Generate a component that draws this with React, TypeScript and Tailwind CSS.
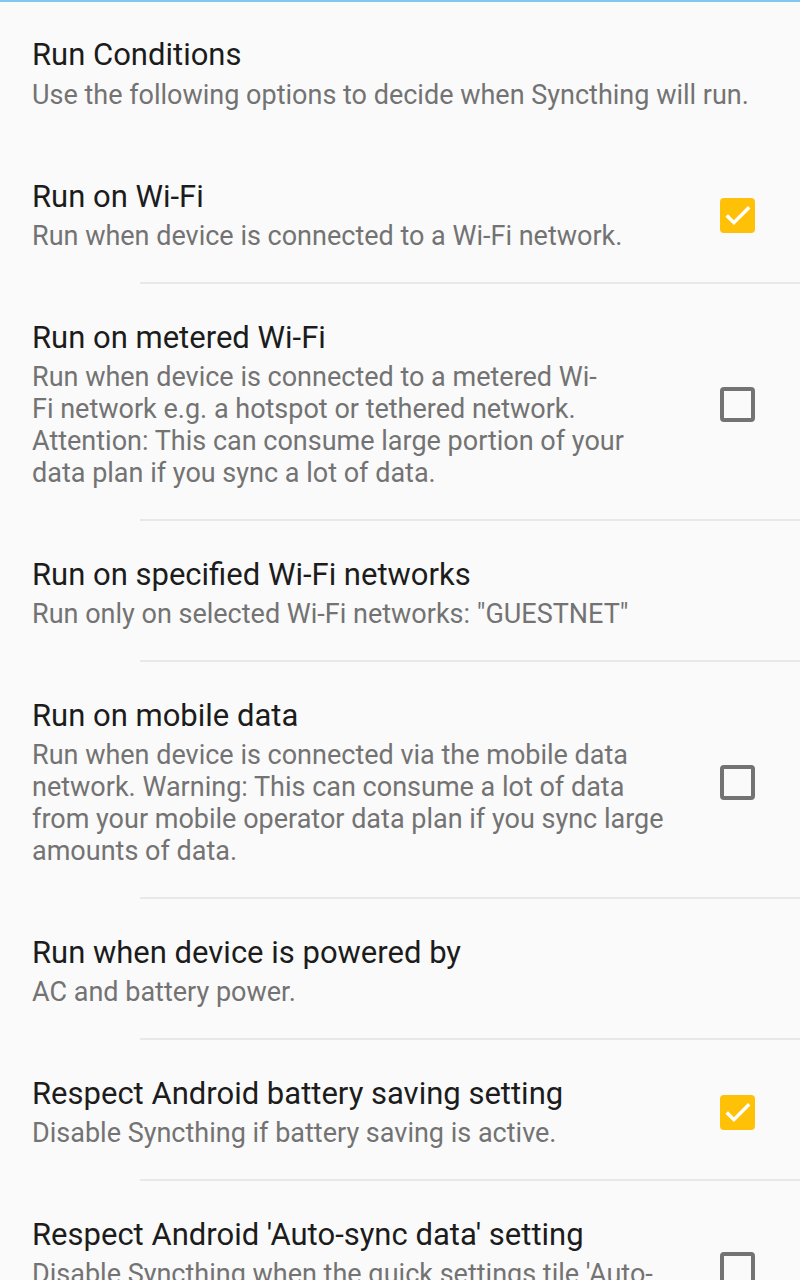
import React from 'react';

type Pref = {
  title: string;
  lines: string[];
  check?: 'on' | 'off';
};

const prefs: Pref[] = [
  { title: 'Run on Wi-Fi', lines: ['Run when device is connected to a Wi-Fi network.'], check: 'on' },
  {
    title: 'Run on metered Wi-Fi',
    lines: [
      'Run when device is connected to a metered Wi-',
      'Fi network e.g. a hotspot or tethered network.',
      'Attention: This can consume large portion of your',
      'data plan if you sync a lot of data.',
    ],
    check: 'off',
  },
  { title: 'Run on specified Wi-Fi networks', lines: ['Run only on selected Wi-Fi networks: "GUESTNET"'] },
  {
    title: 'Run on mobile data',
    lines: [
      'Run when device is connected via the mobile data',
      'network. Warning: This can consume a lot of data',
      'from your mobile operator data plan if you sync large',
      'amounts of data.',
    ],
    check: 'off',
  },
  { title: 'Run when device is powered by', lines: ['AC and battery power.'] },
  { title: 'Respect Android battery saving setting', lines: ['Disable Syncthing if battery saving is active.'], check: 'on' },
  {
    title: "Respect Android 'Auto-sync data' setting",
    lines: ["Disable Syncthing when the quick settings tile 'Auto-", "sync data' is turned off."],
    check: 'off',
  },
];

const CheckBox: React.FC<{ on: boolean }> = ({ on }) =>
  on ? (
    <div className="w-[35px] h-[35px] rounded-[4px] bg-[#ffc107] flex items-center justify-center">
      <svg width="30" height="30" viewBox="0 0 24 24" fill="none">
        <path d="M4 12.6l4.7 4.7L20 6" stroke="#ffffff" strokeWidth="2.8" strokeLinecap="square" />
      </svg>
    </div>
  ) : (
    <div className="w-[35px] h-[35px] rounded-[4px] border-[4px] border-[#737373]" />
  );

const PrefRow: React.FC<{ item: Pref; divider: boolean }> = ({ item, divider }) => (
  <div>
    <div className={`ml-[140px] h-[2px] ${divider ? 'bg-[#e8e8e8]' : 'bg-transparent'}`} />
    <div className="flex items-center pl-8 pr-[45px] pt-9 pb-[30px]">
      <div className="flex-1">
        <div className="text-[31px] leading-[36px] text-[#1c1c1c]">{item.title}</div>
        <div className="mt-[5px] text-[27px] leading-[32px] text-[#737373]">
          {item.lines.map((l, i) => (
            <div key={i} className="whitespace-nowrap">{l}</div>
          ))}
        </div>
      </div>
      {item.check && <CheckBox on={item.check === 'on'} />}
    </div>
  </div>
);

export default function App() {
  return (
    <div
      className="w-[800px] h-[1280px] overflow-hidden bg-[#fafafa]"
      style={{ fontFamily: 'Roboto, "Noto Sans", sans-serif' }}
    >
      <div className="h-[2px] bg-[#81c7ef]" />
      <div className="pl-8 pt-[35px] pb-[30px]">
        <div className="text-[31px] leading-[36px] text-[#1c1c1c]">Run Conditions</div>
        <div className="mt-[6px] text-[27px] leading-[32px] text-[#737373] whitespace-nowrap">
          Use the following options to decide when Syncthing will run.
        </div>
      </div>
      {prefs.map((p, i) => (
        <PrefRow key={p.title} item={p} divider={i > 0} />
      ))}
    </div>
  );
}
